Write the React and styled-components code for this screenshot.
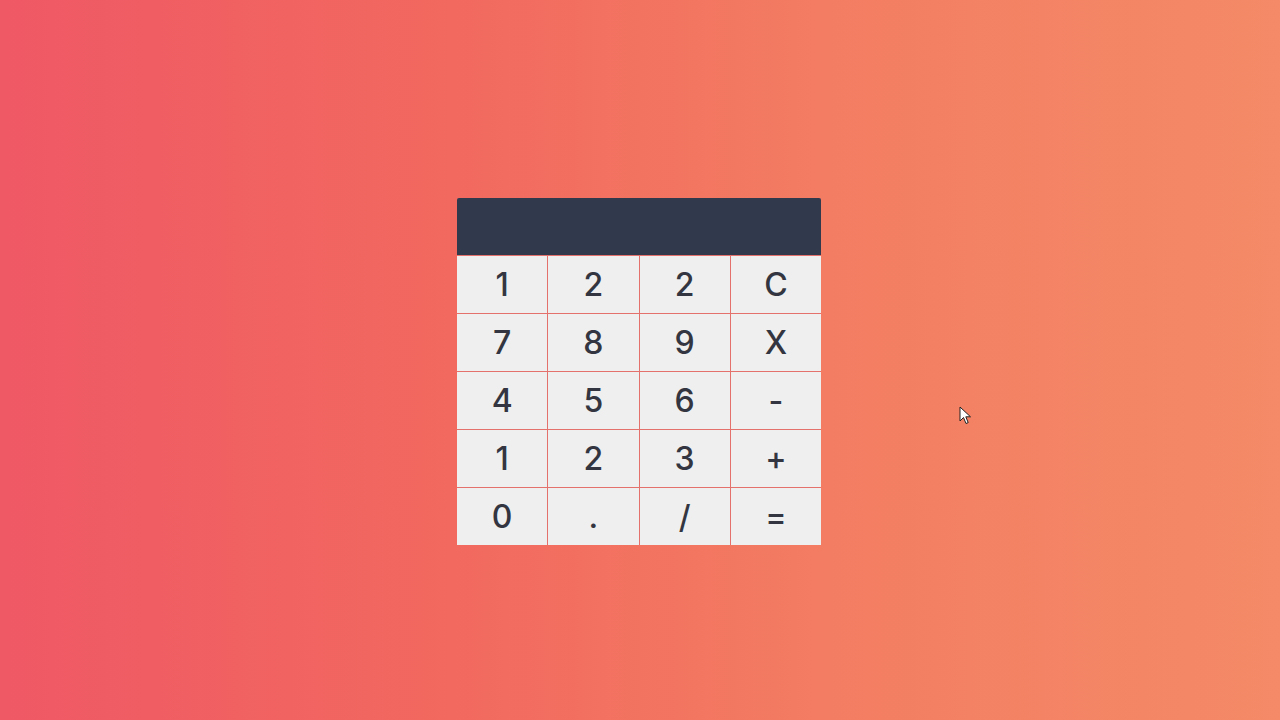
import React from 'react';
import styled, { createGlobalStyle } from 'styled-components';

const GlobalStyle = createGlobalStyle`
  html, body {
    margin: 0;
    padding: 0;
  }
  body {
    font-family: Inter, "Noto Sans", sans-serif;
  }
`;

const Page = styled.div`
  position: relative;
  width: 1280px;
  height: 720px;
  box-sizing: border-box;
  padding: 198px 0 0 457px;
  display: flex;
  justify-content: flex-start;
  align-items: flex-start;
  background: linear-gradient(90deg, #ef5865 0%, #f2695f 35%, #f37d62 65%, #f48a67 100%);
  overflow: hidden;
`;

const Calculator = styled.div`
  width: 364px;
  display: flex;
  flex-direction: column;
  gap: 1px;
  background: #e4716c;
`;

const Display = styled.div`
  height: 57px;
  background: #313a4d;
  border-radius: 2px 2px 0 0;
`;

const Keys = styled.div`
  display: grid;
  grid-template-columns: repeat(4, 1fr);
  grid-auto-rows: 57px;
  gap: 1px;
`;

const Key = styled.button`
  appearance: none;
  border: none;
  margin: 0;
  padding: 0;
  background: #efefef;
  color: #333640;
  font-family: Inter, "Noto Sans", sans-serif;
  font-size: 32px;
  font-weight: 500;
  display: flex;
  align-items: center;
  justify-content: center;
  cursor: pointer;
`;

const Pointer = styled.svg`
  position: absolute;
  left: 959px;
  top: 406px;
`;

const keys = [
  '1', '2', '2', 'C',
  '7', '8', '9', 'X',
  '4', '5', '6', '-',
  '1', '2', '3', '+',
  '0', '.', '/', '=',
];

function App() {
  return (
    <>
      <GlobalStyle />
      <Page>
        <Calculator>
          <Display />
          <Keys>
            {keys.map((k, i) => (
              <Key key={i}>{k}</Key>
            ))}
          </Keys>
        </Calculator>
        <Pointer width="14" height="20" viewBox="0 0 14 20">
          <path
            d="M1 1 L1 15 L4.5 11.5 L7 17.5 L9.2 16.6 L6.8 10.8 L11.5 10.8 Z"
            fill="#ffffff"
            stroke="#222"
            strokeWidth="1"
            strokeLinejoin="round"
          />
        </Pointer>
      </Page>
    </>
  );
}

export default App;
